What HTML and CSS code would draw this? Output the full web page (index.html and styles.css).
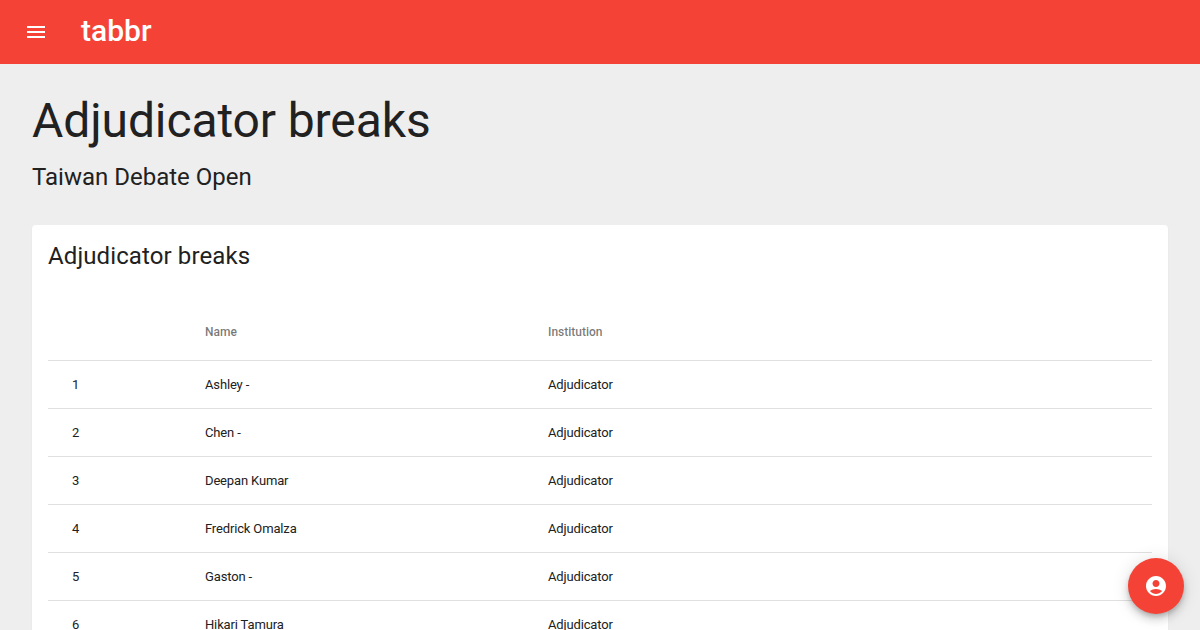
FILE: index.html
```html
<!DOCTYPE html>
<html lang="en">
<head>
    <meta charset="UTF-8">
    <meta name="viewport" content="width=device-width, initial-scale=1.0">
    <title>Adjudicator breaks</title>
    <link rel="stylesheet" href="styles.css">
</head>
<body>
    <header class="toolbar">
        <button class="menu-button" aria-label="Menu">
            <svg viewBox="0 0 24 24" width="24" height="24"><path d="M3 18h18v-2H3v2zm0-5h18v-2H3v2zm0-7v2h18V6H3z"/></svg>
        </button>
        <span class="logo">tabbr</span>
    </header>
    <main class="content">
        <h1 class="page-title">Adjudicator breaks</h1>
        <h2 class="page-subtitle">Taiwan Debate Open</h2>
        <section class="card">
            <h3 class="card-title">Adjudicator breaks</h3>
            <table class="break-table">
                <thead>
                    <tr>
                        <th class="col-rank"></th>
                        <th class="col-name">Name</th>
                        <th>Institution</th>
                    </tr>
                </thead>
                <tbody>
                    <tr><td>1</td><td>Ashley -</td><td>Adjudicator</td></tr>
                    <tr><td>2</td><td>Chen -</td><td>Adjudicator</td></tr>
                    <tr><td>3</td><td>Deepan Kumar</td><td>Adjudicator</td></tr>
                    <tr><td>4</td><td>Fredrick Omalza</td><td>Adjudicator</td></tr>
                    <tr><td>5</td><td>Gaston -</td><td>Adjudicator</td></tr>
                    <tr><td>6</td><td>Hikari Tamura</td><td>Adjudicator</td></tr>
                </tbody>
            </table>
        </section>
    </main>
    <button class="fab" aria-label="Account">
        <svg viewBox="0 0 24 24" width="24" height="24"><path d="M12 2C6.48 2 2 6.48 2 12s4.48 10 10 10 10-4.48 10-10S17.52 2 12 2zm0 4c1.93 0 3.5 1.57 3.5 3.5S13.93 13 12 13s-3.500-1.570-3.500-3.500S10.070 6 12 6zm0 14c-2.030 0-4.430-.82-6.140-2.880C7.550 15.800 9.680 15 12 15s4.450.8 6.140 2.120C16.430 19.180 14.030 20 12 20z"/></svg>
    </button>
</body>
</html>
```

FILE: styles.css
```css
html, body {
    height: 100%;
    overflow: hidden;
}
body {
    margin: 0;
    font-family: Roboto, sans-serif;
    background-color: #eeeeee;
    color: #212121;
}
.toolbar {
    display: flex;
    align-items: center;
    height: 64px;
    padding: 0 12px;
    box-sizing: border-box;
    background-color: #f44336;
    color: white;
}
.menu-button {
    display: flex;
    padding: 0;
    margin-right: 32px;
    width: 48px;
    height: 48px;
    align-items: center;
    justify-content: center;
    background: none;
    border: none;
    fill: white;
}
.logo {
    margin-left: -11px;
    margin-bottom: 2px;
    font-size: 30px;
    font-weight: 500;
    line-height: 32px;
}
.content {
    padding: 25px 32px;
}
.page-title {
    margin: 0 0 8px;
    font-size: 48px;
    font-weight: 400;
    line-height: 64px;
    letter-spacing: -0.11px;
}
.page-subtitle {
    margin: 0 0 32px;
    font-size: 24px;
    font-weight: 400;
    line-height: 32px;
}
.card {
    padding: 15px 16px 16px;
    background-color: white;
    border-radius: 4px;
    box-shadow: 0 1px 1px -1px rgba(0, 0, 0, 0.1), 0 1px 2px rgba(0, 0, 0, 0.06);
}
.card-title {
    margin: 0 0 32px;
    font-size: 24px;
    font-weight: 400;
    line-height: 32px;
    letter-spacing: 0.11px;
}
.break-table {
    width: 100%;
    border-collapse: collapse;
    font-size: 13px;
    table-layout: fixed;
    letter-spacing: -0.15px;
}
.break-table th {
    height: 56px;
    padding: 0;
    font-size: 12px;
    font-weight: 500;
    color: rgba(0, 0, 0, 0.54);
    text-align: left;
    border-bottom: 1px solid #e0e0e0;
    vertical-align: middle;
    letter-spacing: 0;
}
.break-table td {
    height: 47px;
    padding: 0;
    border-bottom: 1px solid #e0e0e0;
}
.break-table td:first-child {
    padding-left: 24px;
}
.col-rank {
    width: 157px;
}
.col-name {
    width: 343px;
}
.fab {
    position: fixed;
    right: 16px;
    bottom: 16px;
    display: flex;
    align-items: center;
    justify-content: center;
    width: 56px;
    height: 56px;
    padding: 0;
    border: none;
    border-radius: 50%;
    background-color: #f44336;
    fill: white;
    box-shadow: 0 3px 5px -1px rgba(0, 0, 0, 0.2), 0 6px 10px rgba(0, 0, 0, 0.14), 0 1px 18px rgba(0, 0, 0, 0.12);
}
```
